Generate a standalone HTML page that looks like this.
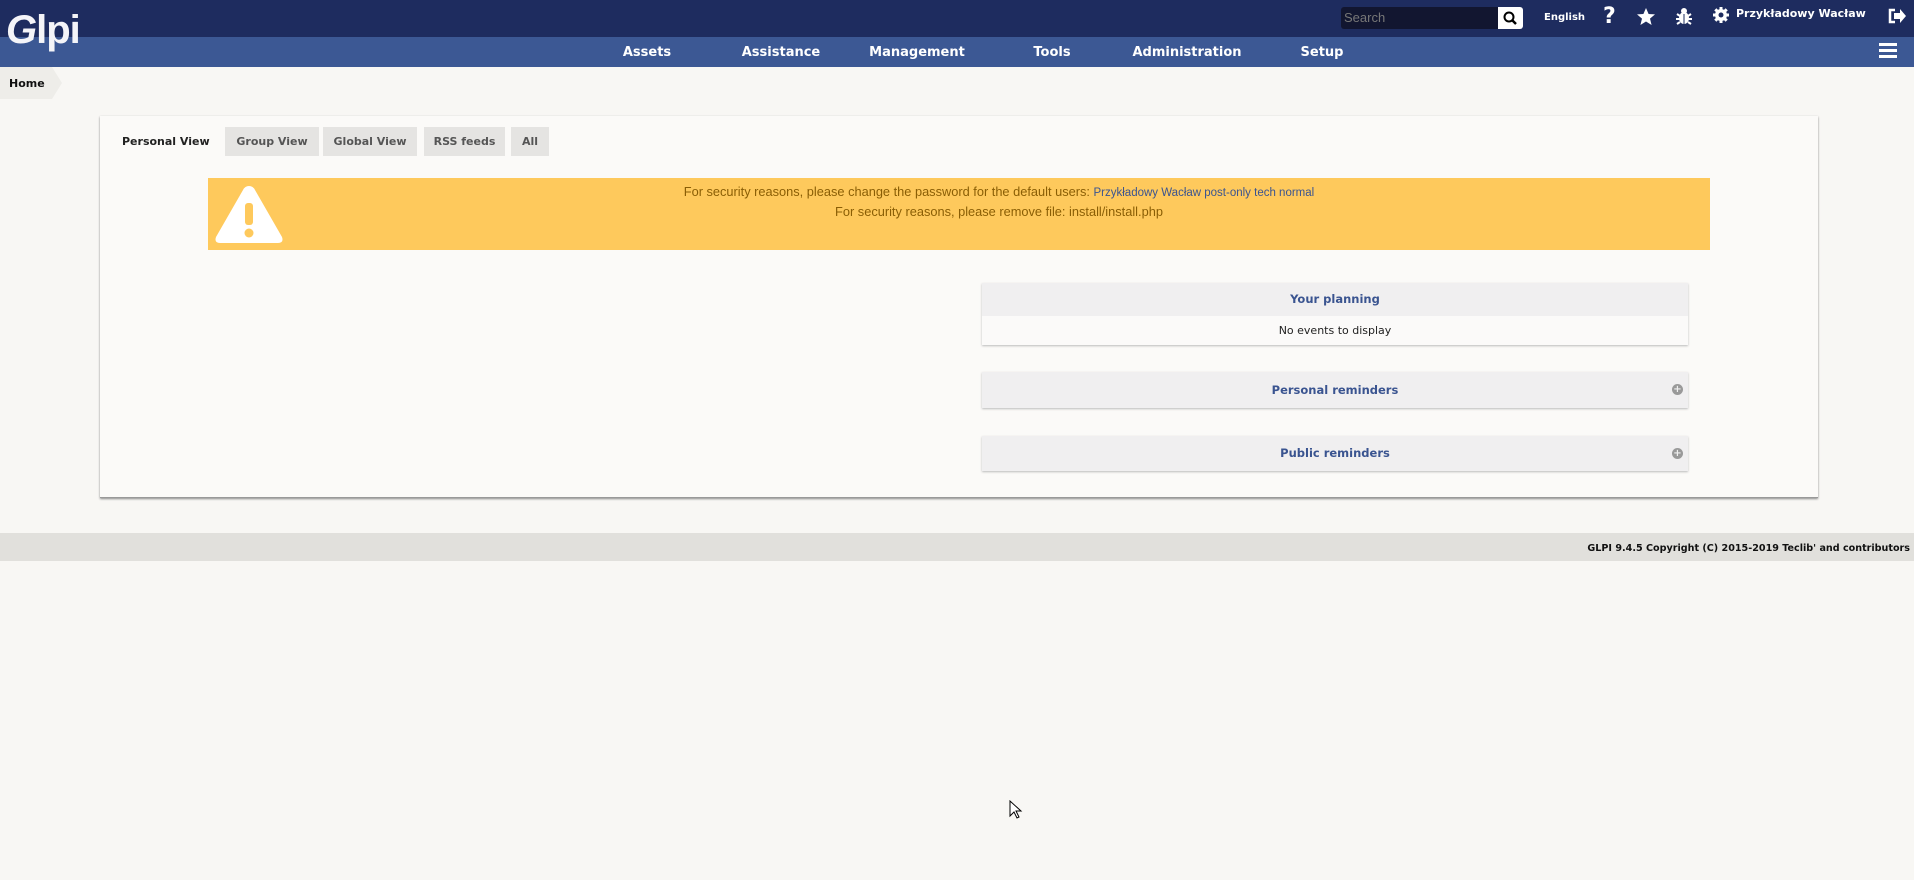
<!DOCTYPE html>
<html><head><meta charset="utf-8"><style>
*{margin:0;padding:0;box-sizing:border-box}
body{width:1914px;height:880px;background:#f8f7f4;font-family:"DejaVu Sans","Liberation Sans",sans-serif;position:relative;overflow:hidden}
.a{position:absolute}
#top{left:0;top:0;width:1914px;height:37px;background:#1e2c5f}
#menu{left:0;top:37px;width:1914px;height:30px;background:#3c5894}
.mi{top:45px;color:#fff;font-weight:bold;font-size:13px;transform:translateX(-50%);white-space:nowrap}
.w{color:#fff;font-weight:bold}
#crumb{left:0;top:67px;width:62px;height:32px;background:#eeede9;clip-path:polygon(0 0,52px 0,62px 16px,52px 32px,0 32px)}
#cont{left:100px;top:116px;width:1718px;height:382px;background:#fbfaf8;box-shadow:0 1px 2px #888;border-bottom:1px solid #999}
.tab{top:127px;height:29px;background:#e5e4e2;color:#555;font-size:11px;font-weight:bold;line-height:29px;text-align:center}
#warn{left:208px;top:178px;width:1502px;height:72px;background:#fec95c}
.wt{color:#8a5e05;font-family:"Liberation Sans",sans-serif;font-size:12.8px;width:100%;text-align:center}
.panel{left:982px;width:706px;background:#f0eff0;box-shadow:0 1px 2px #bbb}
.ph{color:#3a5490;font-size:11.5px;font-weight:bold;text-align:center}
#foot{left:0;top:533px;width:1914px;height:28px;background:#e1e0dc}
.plus{width:11px;height:11px;border-radius:50%;background:#999;color:#eee;font-size:10px;line-height:11px;text-align:center;font-weight:bold}
</style></head><body>
<div id="top" class="a"></div>
<div id="menu" class="a"></div>
<div class="a" style="left:6px;top:10px;color:#f4f4f8;font-size:40px;font-weight:bold;font-family:'Liberation Sans',sans-serif;line-height:40px;letter-spacing:-1px"><span style="font-style:italic">G</span>lpi</div>
<div class="a mi" style="left:647px">Assets</div>
<div class="a mi" style="left:781px">Assistance</div>
<div class="a mi" style="left:917px">Management</div>
<div class="a mi" style="left:1052px">Tools</div>
<div class="a mi" style="left:1187px">Administration</div>
<div class="a mi" style="left:1322px">Setup</div>
<div class="a" style="left:1341px;top:7px;width:157px;height:22px;background:#121630;border-radius:3px 0 0 3px;color:#777;font-size:13px;line-height:22px;padding-left:3px;font-family:'Liberation Sans',sans-serif">Search</div>
<div class="a" style="left:1498px;top:7px;width:25px;height:22px;background:#fff;border-radius:0 3px 3px 0"><svg width="25" height="22"><circle cx="11" cy="10" r="4.5" fill="none" stroke="#000" stroke-width="2"/><line x1="14" y1="13" x2="18" y2="17" stroke="#000" stroke-width="2.5"/></svg></div>
<div class="a w" style="left:1544px;top:12px;font-size:10px">English</div>
<div class="a w" style="left:1603px;top:4px;font-size:22px">?</div>
<svg class="a" style="left:1636px;top:7px" width="20" height="20" viewBox="0 0 20 20"><polygon points="10,1 12.6,7 19,7.4 14,11.6 15.6,18 10,14.5 4.4,18 6,11.6 1,7.4 7.4,7" fill="#fff"/></svg>
<svg class="a" style="left:1675px;top:6px" width="18" height="20" viewBox="0 0 18 20"><ellipse cx="9" cy="12" rx="5" ry="6" fill="#fff"/><circle cx="9" cy="5" r="3" fill="#fff"/><path d="M2 8l3 2M16 8l-3 2M1 13h4M17 13h-4M2 18l3-2M16 18l-3-2" stroke="#fff" stroke-width="2"/><line x1="9" y1="8" x2="9" y2="18" stroke="#1e2c5f" stroke-width="1"/></svg>
<svg class="a" style="left:1712px;top:6px" width="18" height="18" viewBox="0 0 18 18"><circle cx="9" cy="9" r="6" fill="#fff"/><path d="M9 1v16M1 9h16M3.3 3.3l11.4 11.4M14.7 3.3L3.3 14.7" stroke="#fff" stroke-width="3"/><circle cx="9" cy="9" r="2.5" fill="#1e2c5f"/></svg>
<div class="a w" style="left:1736px;top:7px;font-size:11px">Przykładowy Wacław</div>
<svg class="a" style="left:1887px;top:7px" width="20" height="18" viewBox="0 0 20 18"><path d="M8 3H3v12h5" fill="none" stroke="#fff" stroke-width="2.5"/><path d="M7 6h6V2l6 7-6 7v-4H7z" fill="#fff"/></svg>
<div class="a" style="left:1879px;top:43px;width:18px;height:3px;background:#fff;box-shadow:0 6px 0 #fff,0 12px 0 #fff"></div>
<div id="crumb" class="a"></div>
<div class="a" style="left:9px;top:77px;font-size:11px;font-weight:bold;color:#111">Home</div>
<div id="cont" class="a"></div>
<div class="a" style="left:122px;top:135px;font-size:11px;font-weight:bold;color:#222">Personal View</div>
<div class="a tab" style="left:225px;width:94px">Group View</div>
<div class="a tab" style="left:323px;width:94px">Global View</div>
<div class="a tab" style="left:424px;width:81px">RSS feeds</div>
<div class="a tab" style="left:511px;width:38px">All</div>
<div id="warn" class="a">
<svg class="a" style="left:5px;top:5px" width="72" height="62" viewBox="0 0 72 62"><path d="M36 3Q40 3 42 7L69 54Q71 60 65 60H7Q1 60 3 54L30 7Q32 3 36 3Z" fill="#fff"/><rect x="32" y="20" width="8" height="22" rx="3" fill="#fec95c"/><circle cx="36" cy="50" r="4.5" fill="#fec95c"/></svg>
<div class="a wt" style="left:0;top:6px;padding-left:80px">For security reasons, please change the password for the default users: <span style="color:#3a5490;font-size:11.5px">Przykładowy Wacław post-only tech normal</span></div>
<div class="a wt" style="left:0;top:26px;padding-left:80px">For security reasons, please remove file: install/install.php</div>
</div>
<div class="a panel" style="top:283px;height:62px"><div class="ph" style="height:33px;line-height:33px">Your planning</div><div style="height:29px;background:#fbfaf9;font-size:11px;line-height:29px;text-align:center;color:#222">No events to display</div></div>
<div class="a panel" style="top:372px;height:36px"><div class="ph" style="line-height:36px">Personal reminders</div><div class="a plus" style="left:690px;top:12px">+</div></div>
<div class="a panel" style="top:436px;height:35px"><div class="ph" style="line-height:35px">Public reminders</div><div class="a plus" style="left:690px;top:12px">+</div></div>
<div id="foot" class="a"></div>
<div class="a" style="right:4px;top:543px;font-size:9.6px;font-weight:bold;color:#111">GLPI 9.4.5 Copyright (C) 2015-2019 Teclib' and contributors</div>
<svg class="a" style="left:1009px;top:800px" width="14" height="20" viewBox="0 0 14 20"><path d="M1 1v15l4-4 3 6 2-1-3-6h5z" fill="#fff" stroke="#000"/></svg>
</body></html>
